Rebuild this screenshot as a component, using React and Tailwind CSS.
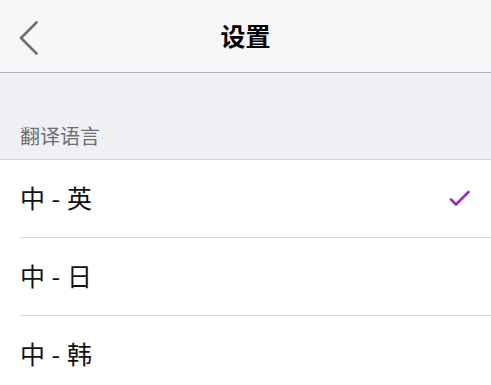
const font = { fontFamily: '"Noto Sans CJK SC", "Noto Sans", sans-serif' }

const languages = [
  { id: 'en', label: '中 - 英' },
  { id: 'ja', label: '中 - 日' },
  { id: 'ko', label: '中 - 韩' },
]

function BackIcon() {
  return (
    <svg width="20" height="34" viewBox="0 0 20 34" fill="none">
      <path d="M17.5 1.5 L2 17 L17.5 32.5" stroke="#707070" strokeWidth="2.6" strokeLinecap="round" strokeLinejoin="round" />
    </svg>
  )
}

function CheckIcon() {
  return (
    <svg width="22" height="18" viewBox="0 0 22 18" fill="none">
      <path d="M2 9.5 L7 14.5 L19.5 2" stroke="#9a2fb5" strokeWidth="2.6" strokeLinecap="round" strokeLinejoin="round" />
    </svg>
  )
}

export default function App() {
  const selected = 'en'

  return (
    <div className="w-[491px] h-[385px] overflow-hidden bg-white" style={font}>
      <header className="h-[73px] bg-[#f7f7f9] border-b border-[#b4b4b6] flex items-center relative">
        <button className="pl-[19px] pt-[4px] flex items-center">
          <BackIcon />
        </button>
        <h1 className="absolute left-0 right-0 text-center text-[25px] font-bold text-black pointer-events-none leading-none top-[23px]">
          设置
        </h1>
      </header>

      <div className="h-[87px] bg-[#efeff4] border-b border-[#d6d6da] flex items-end pl-[20px] pb-[13px]">
        <span className="text-[20px] text-[#6d6d72] leading-none">翻译语言</span>
      </div>

      <ul>
        {languages.map((lang) => (
          <li key={lang.id} className="pl-[20px]">
            <div className="h-[78px] border-b border-[#d8d8dc] flex items-center justify-between pr-[20px]">
              <span className="text-[25px] text-[#111] leading-none pb-[3px] [word-spacing:1px]">{lang.label}</span>
              {selected === lang.id && <CheckIcon />}
            </div>
          </li>
        ))}
      </ul>
    </div>
  )
}
